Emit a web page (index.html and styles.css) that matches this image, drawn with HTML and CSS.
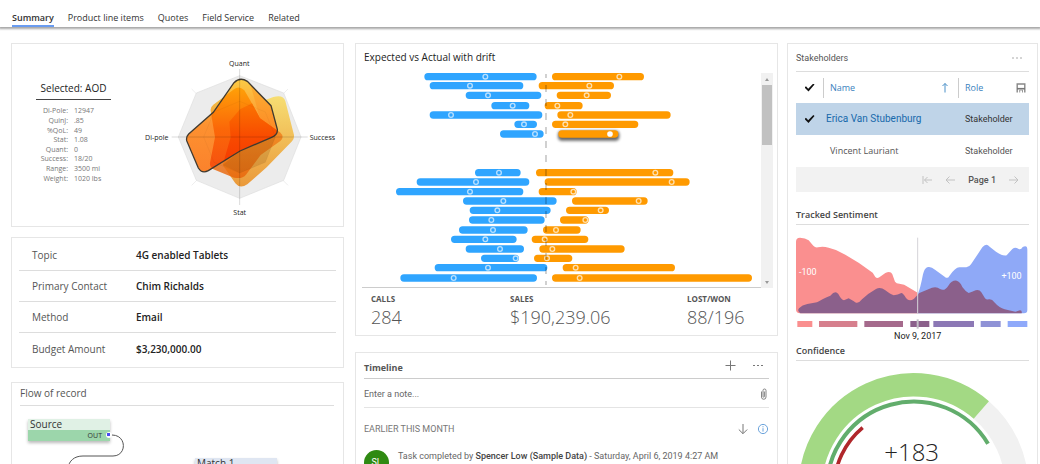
FILE: index.html
```html
<!DOCTYPE html>
<html lang="en">
<head>
<meta charset="utf-8">
<meta name="viewport" content="width=device-width, initial-scale=1">
<title>Opportunity summary</title>
<link rel="stylesheet" href="styles.css">
</head>
<body>
<nav class="tabs" aria-label="Record sections">
  <a class="tab tab-active" href="#summary" aria-current="page">Summary</a>
  <a class="tab" href="#products">Product line items</a>
  <a class="tab" href="#quotes">Quotes</a>
  <a class="tab" href="#service">Field Service</a>
  <a class="tab" href="#related">Related</a>
</nav>

<main class="board" id="summary">
  <div class="column-left">
    <section class="card profile">
      <div class="profile-info">
        <h2 class="profile-title">Selected: AOD</h2>
        <table class="profile-stats">
          <tr><th scope="row">Di-Pole:</th><td>12947</td></tr>
          <tr><th scope="row">QuinJ:</th><td>.85</td></tr>
          <tr><th scope="row">%QoL:</th><td>49</td></tr>
          <tr><th scope="row">Stat:</th><td>1.08</td></tr>
          <tr><th scope="row">Quant:</th><td>0</td></tr>
          <tr><th scope="row">Success:</th><td>18/20</td></tr>
          <tr><th scope="row">Range:</th><td>3500 mi</td></tr>
          <tr><th scope="row">Weight:</th><td>1020 lbs</td></tr>
        </table>
      </div>
      <svg class="radar" viewBox="-60 0 600 525" role="img" aria-label="Radar chart">
        <defs>
          <linearGradient id="ga" x1="0" y1="0" x2="0" y2="1"><stop offset="0" stop-color="#f7dd6c"/><stop offset="1" stop-color="#ea9430"/></linearGradient>
          <linearGradient id="gb" x1="0" y1="0" x2="0" y2="1"><stop offset="0" stop-color="#f9c31c"/><stop offset=".5" stop-color="#f0801a"/><stop offset="1" stop-color="#e8640a"/></linearGradient>
          <linearGradient id="gc" x1="0" y1="0" x2="0" y2="1"><stop offset="0" stop-color="#fbcb45"/><stop offset=".5" stop-color="#fd9130"/><stop offset="1" stop-color="#fb822c"/></linearGradient>
          <linearGradient id="gd" x1="0" y1="0" x2="0" y2="1"><stop offset="0" stop-color="#ffa008"/><stop offset=".45" stop-color="#fb6808"/><stop offset=".9" stop-color="#f65010"/></linearGradient>
          <linearGradient id="ge" x1="0" y1="0" x2="0" y2="1"><stop offset="0" stop-color="#fb7400"/><stop offset=".55" stop-color="#f84a00"/><stop offset="1" stop-color="#f63a00"/></linearGradient>
          <path id="front" d="M222 98Q240 80 262 94L333 167L352 238Q354 254 335 262L240 303L145 362Q126 372 115 354L80 272Q78 260 86 252L160 187Z"/>
          <path id="middle" d="M152 183Q150 172 160 164L222 118Q237 106 253 121L270 150L300 205L360 247Q375 261 361 273L302 315L258 374Q247 388 222 383L160 358Q148 350 150 338L165 262Z"/>
          <clipPath id="in-front"><use href="#front"/></clipPath>
        </defs>
        <path d="M95 117L384 406M384 117L95 406" stroke="#e6e6e6" stroke-width="2"/>
        <path d="M239 77L371 129L423 261L371 391L239 445L109 391L55 261L109 129Z" fill="#ececec" stroke="#dedede" stroke-width="2"/>
        <path d="M239 154L316 186L346 261L316 337L239 369L162 337L131 261L162 186Z" fill="#e8e8e8" stroke="#dcdcdc" stroke-width="2"/>
        <path d="M208 215L240 178L340 141Q370 133 376 153L402 255Q403 266 396 274L320 352L262 403Q240 418 226 400L188 345L212 262Z" fill="url(#ga)" opacity=".95"/>
        <use href="#middle" fill="url(#gb)" opacity=".82"/>
        <path d="M239 154L316 186L346 261L316 337L239 369L188 345L240 303Z" fill="#6b3000" opacity=".16"/>
        <use href="#front" fill="url(#gc)"/>
        <g clip-path="url(#in-front)">
          <use href="#middle" fill="url(#gd)"/>
          <path d="M270 100L300 205L352 245L340 130Z" fill="#fb8a18" opacity=".35"/>
          <path d="M208 215L240 178L276 160L300 205L360 247L335 262L240 303L188 345L212 262Z" fill="url(#ge)"/>
        </g>
        <use href="#front" fill="none" stroke="#403a30" stroke-width="4"/>
        <path d="M239 57V465M35 261H443" stroke="#000" stroke-opacity=".22" stroke-width="2"/>
        <path d="M239 154L316 186L346 261L316 337L239 369L162 337L131 261L162 186Z" fill="none" stroke="#000" stroke-opacity=".06" stroke-width="2"/>
        <g class="radar-label">
          <text x="238" y="49" text-anchor="middle">Quant</text>
          <text x="239" y="494" text-anchor="middle">Stat</text>
          <text x="25" y="269" text-anchor="end">Di-pole</text>
          <text x="449" y="269">Success</text>
        </g>
      </svg>
    </section>

    <section class="card details">
      <dl class="detail-list">
        <div class="detail"><dt>Topic</dt><dd>4G enabled Tablets</dd></div>
        <div class="detail"><dt>Primary Contact</dt><dd>Chim Richalds</dd></div>
        <div class="detail"><dt>Method</dt><dd>Email</dd></div>
        <div class="detail"><dt>Budget Amount</dt><dd>$3,230,000.00</dd></div>
      </dl>
    </section>

    <section class="card flow">
      <h2 class="flow-title">Flow of record</h2>
      <div class="flow-canvas">
        <div class="node node-source">
          <div class="node-name">Source</div>
          <div class="node-port">OUT</div>
        </div>
        <div class="node node-match">
          <div class="node-name">Match 1</div>
        </div>
        <svg class="flow-links" viewBox="0 0 330 120" aria-hidden="true">
          <path d="M98 29H100C115 29 115 50 101 50H71C62 50 57 55 56 62" fill="none" stroke="#555"/>
          <circle cx="97" cy="29" r="3" fill="#fff"/>
          <rect x="95" y="27" width="3" height="3" fill="#4a4af0"/>
        </svg>
      </div>
    </section>
  </div>

  <div class="column-middle">
    <section class="card drift">
      <h2 class="drift-title">Expected vs Actual with drift</h2>
      <div class="drift-body">
        <svg class="drift-chart" viewBox="36 90 1197 651" role="img" aria-label="Expected and actual ranges">
          <defs>
            <filter id="lift" x="-20%" y="-200%" width="140%" height="500%" filterUnits="objectBoundingBox"><feGaussianBlur stdDeviation="4"/></filter>
            <path id="dots-expected" d="M406 110h0M360 137h0M414 166h0M488 197h0M303 225h0M522 253h0M555 282h0M447 398h0M378 426h0M360 455h0M460 483h0M442 511h0M424 540h0M429 570h0M406 598h0M450 627h0M497 655h0M414 683h0M311 714h0"/>
            <path id="dots-actual" d="M808 110h0M718 137h0M710 166h0M622 197h0M661 225h0M646 253h0M916 398h0M965 426h0M670 455h0M866 483h0M752 511h0M706 540h0M618 570h0M584 598h0M607 627h0M591 655h0M677 683h0M689 714h0"/>
          </defs>
          <g fill="none" stroke-linecap="round">
            <path stroke="#2fa5ff" stroke-width="22" d="M234 110H549M250 137H509M358 166H563M435 197H527M250 225H566M504 253H550M461 282H570M386 398H501M211 426H527M149 455H509M350 483H609M370 511H591M368 540H573M338 570H522M314 598H489M358 627H511M404 655H496M265 683H581M162 714H550"/>
            <path stroke="#ff9a00" stroke-width="22" d="M617 110H871M577 137H781M631 166H772M595 197H687M633 225H951M617 253H854M569 398H959M595 426H1008M577 455H669M677 483H882M659 511H766M641 540H705M590 570H681M556 598H704M579 627H813M563 655H656M649 683H964M617 714H1195"/>
            <rect x="624" y="272" width="184" height="30" rx="12" fill="#000" opacity=".6" filter="url(#lift)"/>
            <path stroke="#ff9a00" stroke-width="22" d="M636 282H794"/>
            <use href="#dots-expected" stroke="#b9e0ff" stroke-width="18"/>
            <use href="#dots-expected" stroke="#2fa5ff" stroke-width="10"/>
            <use href="#dots-actual" stroke="#ffe0ae" stroke-width="18"/>
            <use href="#dots-actual" stroke="#ff9a00" stroke-width="10"/>
            <path stroke="#fff" stroke-width="17" d="M780 282h0"/>
          </g>
          <path d="M588 102V735" stroke="#000" stroke-opacity=".22" stroke-width="5" stroke-dasharray="21 21" stroke-dashoffset="9"/>
        </svg>
        <div class="scroller">
          <button class="scroll-step scroll-up" type="button" aria-label="Scroll up"></button>
          <div class="scroll-thumb"></div>
          <button class="scroll-step scroll-down" type="button" aria-label="Scroll down"></button>
        </div>
      </div>
      <div class="kpis">
        <div><div class="kpi-name">CALLS</div><div class="kpi-value">284</div></div>
        <div><div class="kpi-name">SALES</div><div class="kpi-value">$190,239.06</div></div>
        <div><div class="kpi-name">LOST/WON</div><div class="kpi-value">88/196</div></div>
      </div>
    </section>

    <section class="card timeline">
      <header class="timeline-head">
        <h2 class="timeline-title">Timeline</h2>
        <button class="icon-button" type="button" aria-label="Add">
          <svg width="12" height="12" viewBox="0 0 12 12"><path d="M5.500 .500V10.500M.500 5.500H10.500" stroke="#777"/></svg>
        </button>
        <button class="icon-button" type="button" aria-label="More">
          <svg width="12" height="12" viewBox="0 0 12 12"><path d="M1 5.500h2M5 5.500h2M9 5.500h2" stroke="#777"/></svg>
        </button>
      </header>
      <div class="note">
        <input class="note-input" type="text" placeholder="Enter a note..." aria-label="Enter a note">
        <button class="icon-button" type="button" aria-label="Attach">
          <svg width="10" height="12" viewBox="0 0 10 12"><path d="M2.500 3.500V9a2.200 2.200 0 0 0 4.500 0V2.500a1.500 1.500 0 0 0-3 0V8.500a.7.7 0 0 0 1.400 0V3.500" fill="none" stroke="#777" stroke-width=".9"/></svg>
        </button>
      </div>
      <div class="period">
        <h3 class="period-title">EARLIER THIS MONTH</h3>
        <button class="icon-button" type="button" aria-label="Sort">
          <svg width="12" height="12" viewBox="0 0 12 12"><path d="M6 1V10.500M1.800 6.500L6 10.700L10.200 6.500" fill="none" stroke="#777"/></svg>
        </button>
        <button class="icon-button" type="button" aria-label="Information">
          <svg width="12" height="12" viewBox="0 0 12 12"><circle cx="6" cy="6" r="4.600" fill="none" stroke="#6ba3dc"/><path d="M6 5.200V8.600M6 3.200V4.300" stroke="#6ba3dc"/></svg>
        </button>
      </div>
      <article class="event">
        <div class="avatar">SL<span class="avatar-badge"></span></div>
        <p class="event-text">Task completed by <b>Spencer Low (Sample Data)</b> - Saturday, April 6, 2019 4:27 AM</p>
      </article>
    </section>
  </div>

  <section class="card column-right">
    <header class="people-head">
      <h2 class="people-title">Stakeholders</h2>
      <button class="icon-button" type="button" aria-label="More">
        <svg width="12" height="12" viewBox="0 0 12 12"><path d="M1 6h2M5 6h2M9 6h2" stroke="#aaa"/></svg>
      </button>
    </header>
    <table class="people">
      <thead>
        <tr>
          <th class="pick"><input class="tick" type="checkbox" checked aria-label="Select all"></th>
          <th class="name"><div class="head-cell"><button class="sort" type="button">Name</button>
            <svg width="8" height="12" viewBox="0 0 8 12"><path d="M4 10.500V1.500M1.500 4L4 1.500L6.500 4" fill="none" stroke="#4a90c8"/></svg></div></th>
          <th class="role"><div class="head-cell"><button class="sort" type="button">Role</button>
            <button class="icon-button" type="button" aria-label="Save"><svg width="10" height="10" viewBox="0 0 10 10"><path d="M1.200 9.500V1H8.800V9.500" fill="none" stroke="#888" stroke-width="1.400"/><path d="M1 5.700H9" stroke="#777" stroke-width="1.600"/><path d="M3.700 9.500V7H6.500V9.500" fill="none" stroke="#999"/></svg></button></div></th>
        </tr>
      </thead>
      <tbody>
        <tr class="picked">
          <td class="pick"><input class="tick" type="checkbox" checked aria-label="Erica Van Stubenburg"></td>
          <td class="person">Erica Van Stubenburg</td>
          <td class="job">Stakeholder</td>
        </tr>
        <tr>
          <td class="pick"><input class="tick" type="checkbox" aria-label="Vincent Lauriant"></td>
          <td class="person">Vincent Lauriant</td>
          <td class="job">Stakeholder</td>
        </tr>
      </tbody>
    </table>
    <div class="pager">
      <button class="icon-button" type="button" aria-label="First page"><svg width="10" height="10" viewBox="0 0 10 10"><path d="M1 1V9M10 5H2.500M5.500 2L2.500 5L5.500 8" fill="none" stroke="#c2c2c2"/></svg></button>
      <button class="icon-button" type="button" aria-label="Previous page"><svg width="10" height="10" viewBox="0 0 10 10"><path d="M10 5H1M4.500 1.500L1 5L4.500 8.500" fill="none" stroke="#c2c2c2"/></svg></button>
      <span class="pager-text">Page 1</span>
      <button class="icon-button" type="button" aria-label="Next page"><svg width="10" height="10" viewBox="0 0 10 10"><path d="M0 5H9M5.500 1.500L9 5L5.500 8.500" fill="none" stroke="#c2c2c2"/></svg></button>
    </div>

    <h2 class="panel-title">Tracked Sentiment</h2>
    <svg class="sentiment" viewBox="32 90 699 315" role="img" aria-label="Tracked sentiment">
      <path fill="#fa8f8f" d="M32 313V110Q32 98 44 98Q60 98 70 106L84 122Q90 129 98 127Q112 123 130 128Q155 133 180 149Q225 174 262 203L270 216Q275 222 282 217L300 204Q316 197 321 208L329 230Q333 236 342 236Q358 237 368 246L397 263V325H44Q32 325 32 313Z"/>
      <path fill="#8fa9f7" d="M397 325V268Q404 255 413 208Q417 189 428 186Q438 184 449 194L478 215Q487 223 492 213Q510 187 522 187H543Q552 186 557 178L591 127Q602 113 613 125L632 140Q655 155 664 151L681 132Q690 124 700 132Q707 135 712 126Q726 119 726 134V315Q726 325 716 325Z"/>
      <path fill="#8b608b" d="M45 325Q34 317 42 309Q50 300 66 297L95 292Q108 283 135 272Q150 255 159 267Q168 284 176 286L190 280Q204 288 212 293Q220 296 230 283Q250 264 272 252Q285 244 300 256Q315 268 325 271Q338 270 348 264Q353 264 362 279Q372 292 386 281L402 264L440 248Q455 244 464 252Q478 260 489 242Q500 225 514 227Q524 229 531 246Q540 259 550 264Q560 261 571 256Q582 253 588 262L599 280Q604 285 610 283Q620 281 627 292Q642 309 658 313L690 320L704 316Q711 317 709 325Z"/>
      <path d="M397 98V325" stroke="#d5d3d8" stroke-width="3"/>
      <path d="M36 348h45v18H36Z" fill="#fa8f8f"/>
      <path d="M101 348h115v18H101Z" fill="#d67f8d"/>
      <path d="M237 348h116v18H237Z" fill="#a56a8c"/>
      <path d="M375 348h57v18H375Z" fill="#8b608b"/>
      <path d="M444 348h122v18H444Z" fill="#8c78b5"/>
      <path d="M586 348h60v18H586Z" fill="#8f92d6"/>
      <path d="M667 348h59v18H667Z" fill="#8fa9fa"/>
      <path d="M397 343V371" stroke="#c4c0c8" stroke-width="6"/>
      <text class="sentiment-mark" x="41" y="210">-100</text>
      <text class="sentiment-mark" x="709" y="221" text-anchor="end">+100</text>
      <text class="sentiment-date" x="397" y="401" text-anchor="middle">Nov 9, 2017</text>
    </svg>

    <h2 class="panel-title">Confidence</h2>
    <svg class="gauge" viewBox="32 100 699 375" role="img" aria-label="Confidence gauge">
      <g fill="none">
        <path d="M588 226A310 310 0 0 1 695 461" stroke="#f1f1f1" stroke-width="70"/>
        <path d="M75 461A310 310 0 0 1 588 226" stroke="#a3d984" stroke-width="70"/>
        <path d="M125 461A260 260 0 0 1 608 327" stroke="#62ad6c" stroke-width="12"/>
        <path d="M146 461A239 239 0 0 1 232 279" stroke="#b0272b" stroke-width="11"/>
      </g>
      <text class="gauge-value" x="379" y="380" text-anchor="middle">+183</text>
    </svg>
  </section>
</main>
</body>
</html>
```

FILE: styles.css
```css
* { box-sizing: border-box; }

body {
  margin: 0;
  height: 100vh;
  overflow-x: hidden;
  overflow-y: auto;
  scrollbar-width: none;
  background: #fff;
  color: #333;
  font: 10px/14px "Open Sans", "Noto Sans", sans-serif;
}

h2, h3, p, dl, dd { margin: 0; font-size: inherit; font-weight: 400; }
svg { display: block; }
table { border-collapse: collapse; }
th, td { padding: 0; font-weight: 400; text-align: left; }
button, input { margin: 0; padding: 0; border: 0; background: none; color: inherit; font: inherit; }
.icon-button { display: flex; align-items: center; justify-content: center; cursor: pointer; }

.tabs {
  display: flex;
  gap: 14px;
  height: 27px;
  padding: 11px 12px 0;
  box-shadow: 0 1px 2px 1px #a8a8a8;
  font-size: 9px;
}
.tab { color: #333; text-decoration: none; white-space: nowrap; }
.tab-active { border-bottom: 2px solid #6a9cf0; font-weight: 600; }

.board {
  display: grid;
  grid-template-columns: minmax(0, 344fr) minmax(0, 432fr) minmax(0, 251fr);
  padding: 16px 2px 0 11px;
}
.column-left { margin-right: 11px; }
.column-middle { margin-right: 9px; }
.column-right { padding: 7px 8px; }
.card { border: 1px solid #e6e6e6; background: #fff; }

.profile { display: flex; align-items: flex-start; gap: 29px; padding: 6px 3px 1px 24px; }
.profile-info { flex: 75 1 0; padding-top: 31px; }
.profile-title { padding-bottom: 4px; border-bottom: 1px solid #444; color: #222; text-align: center; white-space: nowrap; }
.profile-stats { height: 77px; margin-top: 6px; color: #777; font-size: 7px; line-height: 9px; white-space: nowrap; }
.profile-stats th { width: 32px; text-align: right; }
.profile-stats td { padding-left: 6px; }
.radar { flex: 200 1 0; min-width: 0; }
.radar-label { fill: #222; font-size: 21px; }

.details { margin: 10px 0 14px; padding: 2px 7px; }
.detail { display: flex; align-items: center; height: 31px; padding-left: 13px; border-bottom: 1px solid #ddd; }
.detail:last-child { height: 32px; border-bottom: 0; }
.detail dt { flex: 0 0 104px; color: #555; }
.detail dd { color: #222; font-weight: 600; }

.flow { padding: 3px 9px 0 8px; }
.flow-title { padding-bottom: 5px; border-bottom: 1px solid #ddd; color: #555; }
.flow-canvas { position: relative; min-height: 120px; margin: 0 -9px 0 -8px; }
.flow-links { position: absolute; top: 0; left: 0; width: 330px; height: 120px; }
.node { position: absolute; width: 82px; box-shadow: 0 2px 3px #bbb; color: #333; line-height: 11px; }
.node-name { padding-left: 2px; }
.node-port { padding-right: 8px; font-size: 7px; text-align: right; }
.node-source { left: 16px; top: 13px; background: #e0f1e5; }
.node-source .node-port { background: #9cd6ab; }
.node-match { left: 183px; top: 52px; padding-bottom: 11px; background: #dfe6f2; }

.drift { padding-top: 6px; }
.drift-title { padding-left: 8px; color: #222; }
.drift-body { display: flex; margin: 6px 4px 0 6px; }
.drift-chart { flex: 1 1 0; min-width: 0; border-bottom: 1px solid #ccc; }
.scroller { display: flex; flex: 0 0 12px; flex-direction: column; margin-top: 3px; background: #f1f1f1; }
.scroll-step { display: flex; flex: 0 0 12px; align-items: center; justify-content: center; }
.scroll-step::before { content: ""; border: 2px solid transparent; }
.scroll-up::before { border-top: 0; border-bottom: 3px solid #999; }
.scroll-down::before { border-bottom: 0; border-top: 3px solid #999; }
.scroll-thumb { flex: 0 0 60px; margin: 0 1px auto; background: #c1c1c1; }
.kpis { display: grid; grid-template-columns: 139fr 177fr 87fr; padding: 5px 3px 6px 15px; color: #555; }
.kpi-name { font-size: 8px; font-weight: 700; line-height: 12px; }
.kpi-value { font-size: 18px; font-weight: 300; line-height: 24px; }

.timeline { margin-top: 16px; padding: 0 8px; color: #666; font-family: Roboto, "Open Sans", sans-serif; font-size: 9px; }
.timeline-head { display: flex; align-items: center; gap: 15px; height: 26px; border-bottom: 1px solid #ccc; }
.timeline-title { flex: 1; padding-top: 4px; color: #555; font-family: "Open Sans", sans-serif; font-weight: 700; }
.timeline-head .icon-button:last-child { margin-right: 5px; }
.note { display: flex; align-items: center; height: 29px; padding-top: 2px; border-bottom: 1px solid #e4e4e4; }
.note-input { flex: 1; min-width: 0; }
.note-input::placeholder { color: #666; opacity: 1; }
.period { display: flex; align-items: center; gap: 8px; height: 42px; }
.period-title { flex: 1; color: #777; }
.event { display: flex; align-items: flex-start; gap: 9px; min-height: 60px; }
.avatar { position: relative; flex: 0 0 25px; height: 25px; border-radius: 50%; background: #2f8a12; color: #fff; line-height: 25px; text-align: center; }
.avatar-badge { position: absolute; right: -2px; bottom: 1px; width: 10px; height: 10px; border-radius: 50%; background: #e4e4e4; }
.event-text { line-height: 12px; }
.event-text b { font-weight: 500; color: #444; }

.people-head { display: flex; align-items: center; justify-content: space-between; height: 21px; padding: 0 6px 6px 0; border-bottom: 1px solid #ddd; }
.people-title { color: #555; font-family: Roboto, sans-serif; font-size: 9px; }
.people { width: 100%; table-layout: fixed; }
.people thead tr { height: 31px; }
.people tbody tr { height: 32px; }
.people .pick { width: 27px; text-align: center; }
.people .role { width: 71px; }
.head-cell { display: flex; align-items: center; justify-content: space-between; height: 20px; padding: 0 9px 0 6px; border-left: 1px solid #ccc; color: #3a82be; font-size: 9px; }
.role .head-cell { padding-right: 3px; }
.tick { display: block; width: 10px; height: 8px; margin: 0 auto; appearance: none; }
.tick:checked { background: #111; clip-path: polygon(0 50%, 15% 35%, 37% 65%, 88% 0, 100% 12%, 40% 100%); }
.person { padding-left: 7px; color: #555; font-size: 9px; white-space: nowrap; }
.job { padding-left: 7px; color: #555; font-family: Roboto, sans-serif; font-size: 9px; }
.picked { background: #bfd4e8; }
.picked .person { padding-left: 3px; color: #1769ab; font-family: Roboto, sans-serif; font-size: 10px; }
.picked .job { color: #333; }
.pager { display: flex; align-items: center; justify-content: flex-end; gap: 13px; height: 25px; padding-right: 10px; background: #f2f2f2; font-family: Roboto, sans-serif; font-size: 9px; }
.pager-text { color: #555; font-weight: 500; }

.panel-title { border-bottom: 1px solid #ddd; color: #444; font-size: 9px; font-weight: 600; line-height: 18px; }
.pager + .panel-title { margin: 14px 0 10px; }
.sentiment { width: 100%; }
.sentiment-mark { fill: #fff; font-family: Roboto, sans-serif; font-size: 27px; }
.sentiment-date { fill: #222; font-family: Roboto, sans-serif; font-size: 27px; }
.sentiment + .panel-title { margin: 2px 0 7px; }
.gauge { width: 100%; }
.gauge-value { fill: #222; font-size: 72px; font-weight: 300; }
```
